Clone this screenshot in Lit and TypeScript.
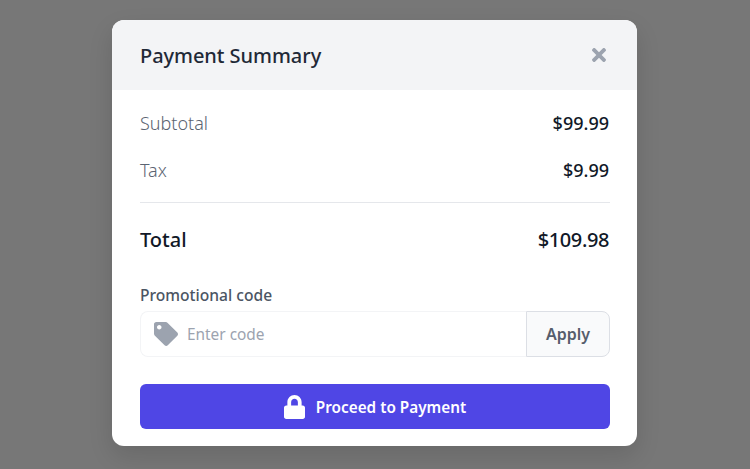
import { LitElement, html, css } from "lit";
import { customElement } from "lit/decorators.js";

@customElement("app-root")
export class AppRoot extends LitElement {
  static styles = css`
    :host {
      display: flex;
      justify-content: flex-start;
      align-items: flex-start;
      width: 750px;
      height: 469px;
      box-sizing: border-box;
      padding: 20px 0 0 112px;
      background: #777777;
      font-family: "Noto Sans", sans-serif;
      overflow: hidden;
    }
    .modal {
      width: 525px;
      height: 426px;
      background: #fff;
      border-radius: 12px;
      overflow: hidden;
      box-shadow: 0 10px 25px rgba(0, 0, 0, 0.12);
      display: flex;
      flex-direction: column;
    }
    .header {
      height: 70px;
      flex: none;
      background: #f3f4f6;
      display: flex;
      align-items: center;
      justify-content: space-between;
      padding: 0 28px;
    }
    .title {
      font-size: 20px;
      font-weight: 500;
      color: #1f2937;
      letter-spacing: -0.05px;
    }
    .close {
      display: block;
      width: 14px;
      height: 14px;
      color: #9ca3af;
      margin-right: 3px;
    }
    .body {
      padding: 9px 27px 0 28px;
      display: flex;
      flex-direction: column;
    }
    .row {
      display: flex;
      justify-content: space-between;
      align-items: center;
      height: 47px;
      font-size: 18px;
      font-weight: 350;
      color: #5b6472;
    }
    .amt {
      color: #111827;
      font-weight: 500;
      margin-right: 1px;
    }
    .divider {
      height: 1px;
      background: #e5e7eb;
      margin-top: 9px;
    }
    .total {
      height: 73px;
      font-size: 20px;
      font-weight: 500;
      color: #111827;
    }
    .total .amt {
      font-weight: 500;
      letter-spacing: -0.4px;
    }
    .label {
      margin-top: 9px;
      font-size: 15.6px;
      line-height: 20px;
      font-weight: 500;
      color: #4b5563;
    }
    .promo {
      display: flex;
      margin-top: 6px;
      height: 46px;
    }
    .field {
      flex: 1;
      display: flex;
      align-items: center;
      gap: 9px;
      padding-left: 13px;
      border: 1px solid #f3f4f6;
      border-right: none;
      border-radius: 8px 0 0 8px;
      font-size: 15.4px;
      color: #9ca3af;
    }
    .tag {
      width: 24px;
      height: 24px;
      display: block;
      color: #9ca3af;
    }
    .apply {
      width: 84px;
      box-sizing: border-box;
      display: flex;
      align-items: center;
      justify-content: center;
      background: #f9fafb;
      border: 1px solid #dcdfe5;
      border-radius: 0 8px 8px 0;
      font-size: 16px;
      font-weight: 600;
      color: #565e6c;
    }
    .pay {
      margin-top: 27px;
      height: 45px;
      background: #4f46e5;
      border-radius: 6px;
      display: flex;
      align-items: center;
      justify-content: center;
      gap: 11px;
      color: #fff;
      font-size: 15.3px;
      font-weight: 600;
    }
    .lock {
      width: 21px;
      height: 24px;
      display: block;
    }
  `;

  render() {
    return html`
      <div class="modal">
        <div class="header">
          <span class="title">Payment Summary</span>
          <svg class="close" viewBox="0 80 352 352" fill="currentColor">
            <path d="M242.720 256l100.070-100.070c12.280-12.280 12.280-32.190 0-44.480l-22.240-22.240c-12.280-12.280-32.190-12.280-44.480 0L176 189.280 75.930 89.210c-12.280-12.280-32.190-12.280-44.480 0L9.210 111.450c-12.280 12.280-12.280 32.190 0 44.480L109.280 256 9.210 356.070c-12.280 12.280-12.280 32.190 0 44.480l22.240 22.240c12.280 12.280 32.200 12.280 44.480 0L176 322.720l100.070 100.070c12.280 12.280 32.200 12.280 44.480 0l22.240-22.240c12.280-12.280 12.280-32.190 0-44.480L242.720 256z" />
          </svg>
        </div>
        <div class="body">
          <div class="row"><span>Subtotal</span><span class="amt">$99.99</span></div>
          <div class="row"><span>Tax</span><span class="amt">$9.99</span></div>
          <div class="divider"></div>
          <div class="row total"><span>Total</span><span class="amt">$109.98</span></div>
          <div class="label">Promotional code</div>
          <div class="promo">
            <div class="field">
              <svg class="tag" viewBox="0 0 512 512" fill="currentColor">
                <path d="M0 252.118V48C0 21.490 21.490 0 48 0h204.118a48 48 0 0 1 33.941 14.059l211.882 211.882c18.745 18.745 18.745 49.137 0 67.882L293.823 497.941c-18.745 18.745-49.137 18.745-67.882 0L14.059 286.059A48 48 0 0 1 0 252.118zM112 64c-26.510 0-48 21.490-48 48s21.490 48 48 48 48-21.490 48-48-21.490-48-48-48z" />
              </svg>
              <span>Enter code</span>
            </div>
            <div class="apply">Apply</div>
          </div>
          <div class="pay">
            <svg class="lock" viewBox="0 0 448 512" fill="currentColor">
              <path d="M400 224h-24v-72C376 68.200 307.800 0 224 0S72 68.200 72 152v72H48c-26.500 0-48 21.500-48 48v192c0 26.500 21.500 48 48 48h352c26.500 0 48-21.500 48-48V272c0-26.500-21.500-48-48-48zm-104 0H152v-72c0-39.700 32.300-72 72-72s72 32.300 72 72v72z" />
            </svg>
            <span>Proceed to Payment</span>
          </div>
        </div>
      </div>
    `;
  }
}
